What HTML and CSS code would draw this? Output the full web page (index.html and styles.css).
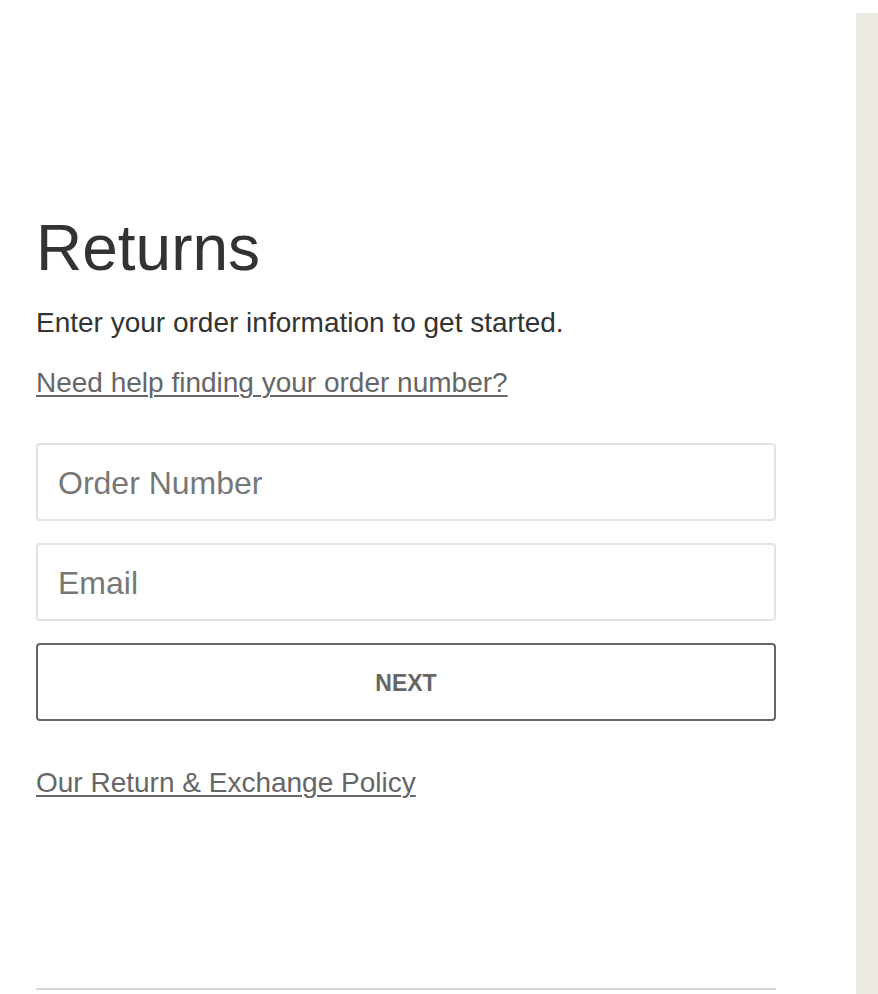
FILE: index.html
```html
<!DOCTYPE html>
<html lang="en">
<head>
<meta charset="utf-8">
<title>Returns</title>
<link rel="stylesheet" href="styles.css">
</head>
<body>
<div class="page">
  <main class="main">
    <h1 class="title">Returns</h1>
    <p class="intro">Enter your order information to get started.</p>
    <a class="link help-link" href="#">Need help finding your order number?</a>
    <form class="form">
      <input class="field" type="text" placeholder="Order Number">
      <input class="field" type="email" placeholder="Email">
      <button class="next" type="button">NEXT</button>
    </form>
    <a class="link policy-link" href="#">Our Return &amp; Exchange Policy</a>
    <div class="rule"></div>
  </main>
  <aside class="side"></aside>
</div>
</body>
</html>
```

FILE: styles.css
```css
html, body {
  margin: 0;
  padding: 0;
  background: #fff;
}

body {
  font-family: "Liberation Sans", Arial, Helvetica, sans-serif;
  color: #333;
}

.page {
  display: flex;
  min-height: 994px;
  overflow: hidden;
}

.main {
  flex: 1;
  padding: 216px 0 0 36px;
  display: flex;
  flex-direction: column;
  align-items: flex-start;
}

.title {
  margin: 0;
  font-size: 64px;
  line-height: 64px;
  font-weight: 400;
  color: #333;
}

.intro {
  margin: 29px 0 0;
  font-size: 28px;
  line-height: 28px;
  color: #333;
}

.link {
  font-size: 28px;
  line-height: 28px;
  color: #666;
  text-decoration: underline;
  text-underline-offset: 3px;
  text-decoration-thickness: 2px;
}

.help-link {
  margin-top: 32px;
}

.form {
  margin-top: 46px;
  width: 740px;
  display: flex;
  flex-direction: column;
  gap: 22px;
}

.field {
  box-sizing: border-box;
  width: 740px;
  height: 78px;
  margin: 0;
  padding: 2px 20px 0;
  border: 2px solid #e2e2e2;
  border-radius: 4px;
  font-family: inherit;
  font-size: 32px;
  color: #333;
  background: #fff;
  outline: none;
}

.field::placeholder {
  color: #777;
}

.next {
  box-sizing: border-box;
  width: 740px;
  height: 78px;
  margin: 0;
  border: 2px solid #666;
  border-radius: 4px;
  background: #fff;
  font-family: inherit;
  font-size: 23px;
  font-weight: 700;
  color: #666;
  padding: 3px 0 0;
}

.policy-link {
  margin-top: 48px;
}

.rule {
  margin-top: 191px;
  width: 740px;
  height: 2px;
  background: #d4d4d4;
}

.side {
  width: 22px;
  margin-top: 13px;
  background: #ece9e3;
}
```
